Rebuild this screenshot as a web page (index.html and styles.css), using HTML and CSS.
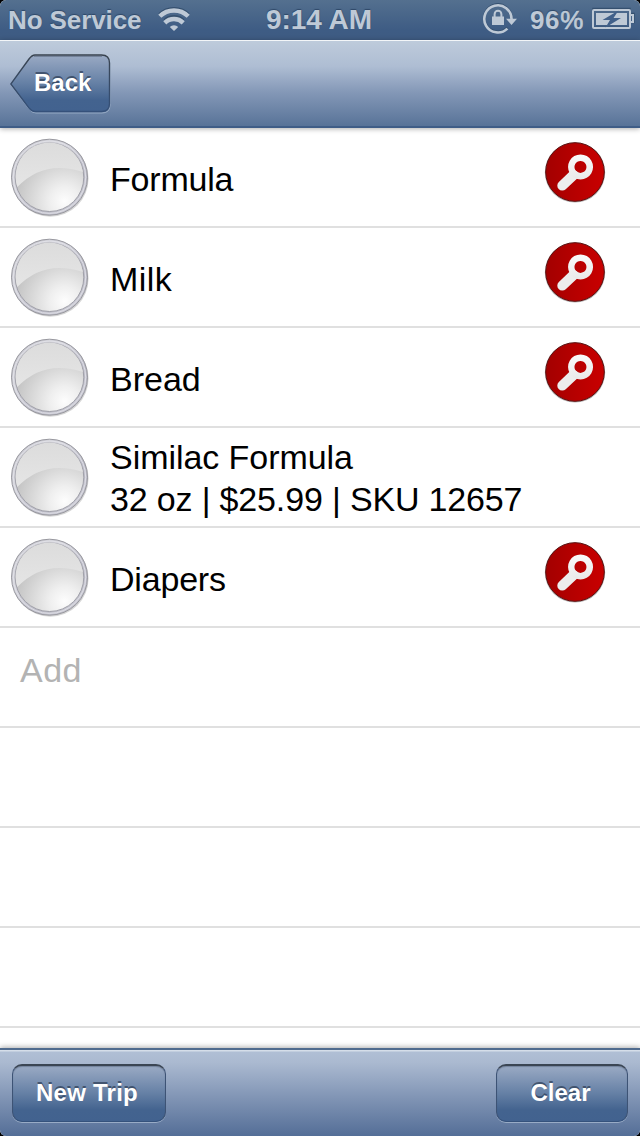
FILE: index.html
```html
<!DOCTYPE html>
<html lang="en">
<head>
<meta charset="utf-8">
<title>Shopping list</title>
<link rel="stylesheet" href="styles.css">
</head>
<body>
<svg class="defs" width="0" height="0" aria-hidden="true">
  <defs>
    <linearGradient id="ring" x1="0" y1="0" x2="1" y2="1"><stop offset="0" stop-color="#c4c4cb"/><stop offset=".35" stop-color="#d4d4db"/><stop offset=".65" stop-color="#bcbcc8"/><stop offset="1" stop-color="#cecdd5"/></linearGradient>
    <radialGradient id="face" cx=".72" cy=".85" r=".72"><stop offset="0" stop-color="#fdfdfd"/><stop offset=".3" stop-color="#efefef"/><stop offset=".7" stop-color="#d6d6d6"/><stop offset="1" stop-color="#c4c4c4"/></radialGradient>
    <linearGradient id="gloss" x1="0" y1="0" x2="0" y2="1"><stop offset="0" stop-color="#dcdcdc"/><stop offset="1" stop-color="#e5e5e5"/></linearGradient>
    <linearGradient id="red" x1="0" y1="0" x2="1" y2="0"><stop offset="0" stop-color="#a30000"/><stop offset="1" stop-color="#c90000"/></linearGradient>
    <linearGradient id="glass" x1="0" y1="0" x2="0" y2="1"><stop offset="0" stop-color="#fafafa"/><stop offset="1" stop-color="#e9e9e9"/></linearGradient>
    <linearGradient id="btn" x1="0" y1="0" x2="0" y2="1"><stop offset="0" stop-color="#9aaac4"/><stop offset=".5" stop-color="#6580a5"/><stop offset=".8" stop-color="#43638f"/><stop offset="1" stop-color="#42628f"/></linearGradient>
    <linearGradient id="edge" x1="0" y1="0" x2="0" y2="1"><stop offset="0" stop-color="#39434f"/><stop offset="1" stop-color="#35517a"/></linearGradient>
    <symbol id="check" viewBox="0 0 80 80">
      <circle cx="40.3" cy="40.4" r="38.3" fill="#000" opacity=".16"/>
      <circle cx="39.5" cy="39.2" r="38" fill="url(#ring)" stroke="#98989f"/>
      <circle cx="39.5" cy="39.2" r="36.2" fill="none" stroke="#e6e6ec" stroke-width=".8"/>
      <circle cx="39.5" cy="39.2" r="34.3" fill="url(#face)" stroke="#a0a0a9"/>
      <path d="M7.300 49A33.800 33.800 0 1 1 72.900 34Q34 21 7.300 49Z" fill="url(#gloss)"/>
    </symbol>
    <symbol id="search" viewBox="0 0 62 62">
      <circle cx="31" cy="31.4" r="30.2" fill="#000" opacity=".3"/>
      <circle cx="31" cy="31" r="29.3" fill="url(#red)" stroke="#5e1010"/>
      <path d="M29.500 34L18.300 44.600" stroke="#ededed" stroke-width="10" stroke-linecap="round"/>
      <path d="M36.500 13.400a12.500 12.500 0 1 0 .1 0ZM36.500 19.900a6 6 0 1 1-.1 0Z" fill="url(#glass)" fill-rule="evenodd"/>
    </symbol>
  </defs>
</svg>
<div class="screen">
  <div class="status">
    <div class="side">
      <span class="carrier">No Service</span>
      <svg class="wifi" width="32" height="25" viewBox="0 0 32 25">
        <g fill="none" stroke="#35506f" stroke-width="4" transform="translate(0 -1.2)"><path d="M1.8 9a20.3 20.3 0 0 1 28.4 0M7 14.800a13 13 0 0 1 18 0"/></g>
        <g fill="none" stroke="#bec9d6" stroke-width="4.400"><path d="M1.800 9.300a20.300 20.300 0 0 1 28.400 0M6.800 15.800a13.200 13.200 0 0 1 18.400 0"/></g>
        <path d="M11.800 20a6 6 0 0 1 8.400 0L16 24Z" fill="#bec9d6"/>
      </svg>
    </div>
    <span class="time">9:14 AM</span>
    <div class="side right">
      <svg class="lock" width="36" height="34" viewBox="0 0 36 34">
        <g fill="none" stroke="#35506f" stroke-width="2.600"><path d="M25.500 26.600A13.600 13.600 0 1 1 29.400 17"/></g>
        <g fill="none" stroke="#bec9d6" stroke-width="2.600"><path d="M25.400 27.600A13.600 13.600 0 1 1 29.500 18"/><path d="M12.600 16V13.200a3.400 3.400 0 0 1 6.800 0V16" stroke-width="2"/></g>
        <path d="M10 15.400h12V24H10ZM24 17.800h11L29.500 24Z" fill="#bec9d6"/>
      </svg>
      <span class="percent">96<span class="sign">%</span></span>
      <svg class="battery" width="44" height="24" viewBox="0 0 44 24">
        <path d="M1 2H38V7H42V16H38V21H1Z" fill="none" stroke="#35506f" stroke-width="1.500" transform="translate(0 -.5)"/>
        <rect x="1" y="3" width="37" height="18" rx="1" fill="none" stroke="#bec9d6" stroke-width="2"/>
        <path d="M38 8H41V15H38" fill="none" stroke="#bec9d6" stroke-width="2"/>
        <path d="M4 6H35V18H4Z" fill="#bec9d6"/>
        <path d="M26.500 3.500L10.500 13H18L13.500 20.500L29 11H21.500Z" fill="#41608a"/>
      </svg>
    </div>
  </div>
  <header class="nav">
    <a class="back">
      <svg class="back-shape" width="102" height="62" viewBox="0 0 102 62">
        <path d="M26 2H92Q100 2 100 10V51Q100 59 92 59H26Q22 59 19 55L1 31L19 7Q22 2 26 2Z" fill="none" stroke="#a8bad1" stroke-opacity=".7"/>
        <path d="M25 1H91.500Q99.500 1 99.500 9V49.500Q99.500 57.500 91.500 57.500H25Q22 57.500 19 54L.8 30L19 5Q22 1 25 1Z" fill="url(#btn)" stroke="url(#edge)" stroke-width="1.400"/>
        <path d="M24 2.500H92" stroke="#34404f" stroke-opacity=".35"/>
      </svg>
      <span class="back-label">Back</span>
    </a>
  </header>
  <main class="list">
    <div class="row"><svg class="check"><use href="#check"/></svg><div class="label single">Formula</div><svg class="search"><use href="#search"/></svg></div>
    <div class="row"><svg class="check"><use href="#check"/></svg><div class="label single milk">Milk</div><svg class="search"><use href="#search"/></svg></div>
    <div class="row"><svg class="check"><use href="#check"/></svg><div class="label single bread">Bread</div><svg class="search"><use href="#search"/></svg></div>
    <div class="row"><svg class="check"><use href="#check"/></svg><div class="label">Similac Formula<br><span class="detail">32 oz | $25.99 | SKU 12657</span></div></div>
    <div class="row"><svg class="check"><use href="#check"/></svg><div class="label single">Diapers</div><svg class="search"><use href="#search"/></svg></div>
    <div class="row add">Add</div>
    <div class="row"></div>
    <div class="row"></div>
    <div class="row"></div>
  </main>
  <footer class="toolbar">
    <button class="button trip">New Trip</button>
    <button class="button clear">Clear</button>
  </footer>
</div>
</body>
</html>
```
FILE: styles.css
```css
* { box-sizing: border-box; }
body { margin: 0; background: #000; font-family: "Liberation Sans", Arial, sans-serif; }
.defs { position: absolute; }
.screen { display: flex; flex-direction: column; width: 640px; height: 1136px; background: #fff; border-radius: 6px; overflow: hidden; }
.status { display: flex; flex: none; height: 40px; padding: 0 6px 0 8px; background: linear-gradient(#54708f, #3e5c84 75%, #3e5b82); color: #bec9d6; font-size: 26px; font-weight: bold; line-height: 40px; text-shadow: 0 -1px 1px #2f4868; white-space: nowrap; }
.side { display: flex; flex: 1 1 0; }
.carrier { width: 150px; letter-spacing: -.1px; }
.wifi { margin-top: 7px; }
.time { flex: none; width: 110px; font-size: 28px; letter-spacing: -.05px; }
.right { justify-content: flex-end; }
.lock { margin-top: 1px; }
.percent { width: 58px; margin-left: 12px; letter-spacing: .6px; }
.sign { font-weight: normal; -webkit-text-stroke: .7px #bec9d6; }
.battery { margin: 7px -2px 0 4px; }
.nav { flex: none; position: relative; z-index: 1; height: 88px; padding: 13px 0 0 10px; background: linear-gradient(#becbdb, #aebdd3 30%, #8498b7 60%, #587398); border-top: 1px solid #f3f6f8; border-bottom: 2px solid #3f5d87; box-shadow: 0 1px 5px rgba(0,0,0,.32); }
.back { display: grid; width: 102px; height: 62px; }
.back-shape, .back-label { grid-area: 1 / 1; }
.back-label { padding: 15px 0 0 24px; color: #fff; font-size: 24px; font-weight: bold; line-height: 28px; text-shadow: 0 -2px 0 rgba(43,59,83,.7); }
.list { flex: none; height: 920px; overflow: hidden; }
.row { display: flex; height: 100px; border-bottom: 2px solid #e0e0e0; }
.check { width: 80px; height: 80px; margin: 10px 0 0 10px; flex: none; }
.label { flex: 1; padding: 8px 0 0 20px; color: #000; font-size: 34px; line-height: 42px; letter-spacing: -.05px; white-space: nowrap; }
.single { padding-top: 30px; letter-spacing: -.2px; }
.milk { letter-spacing: .4px; }
.bread { letter-spacing: 0; }
.detail { letter-spacing: -.16px; }
.search { width: 62px; height: 62px; margin: 13px 34px 0 0; flex: none; }
.add { padding: 21px 0 0 20px; color: #b3b3b3; font-size: 34px; line-height: 42px; letter-spacing: .5px; }
.toolbar { display: flex; flex: none; justify-content: space-between; position: relative; z-index: 1; height: 88px; padding: 14px 12px 0; background: linear-gradient(#d5dee9 0, #d5dee9 1px, #b0bfd5 2px, #aab9d0 15%, #8195b5 55%, #546e97); border-top: 2px solid #506b8e; box-shadow: 0 -1px 5px rgba(0,0,0,.32); }
.button { height: 58px; padding: 0 0 2px; border: 1px solid; border-width: 2px 1px 1px; border-color: #3b4654 #3d5375 #35527c; border-radius: 10px; background: linear-gradient(#9aaac4, #6580a5 50%, #43638f 80%, #42628f); box-shadow: 0 1px 0 rgba(170,187,210,.75), inset 0 1px 1px rgba(60,75,100,.4); color: #fff; font: bold 24px/28px "Liberation Sans", Arial, sans-serif; text-shadow: 0 -2px 0 rgba(43,59,83,.7); }
.trip { width: 154px; padding-right: 4px; letter-spacing: .25px; }
.clear { width: 132px; padding-right: 3px; }
```
